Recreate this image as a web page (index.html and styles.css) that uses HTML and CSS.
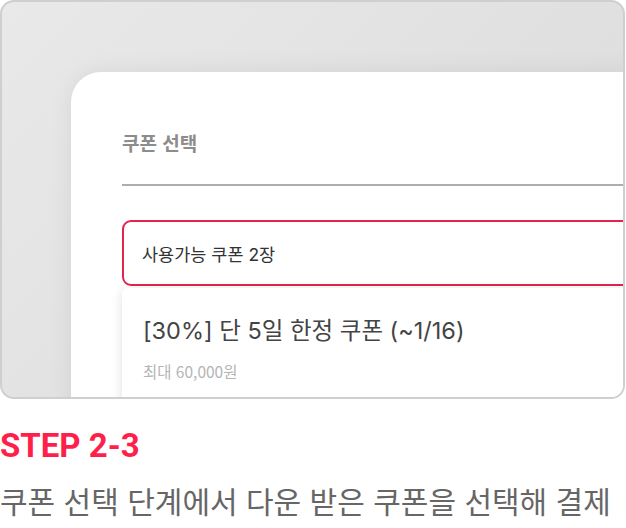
FILE: index.html
```html
<!DOCTYPE html>
<html lang="ko">
<head>
<meta charset="utf-8">
<link rel="stylesheet" href="styles.css">
</head>
<body>
<div class="frame">
  <div class="panel">
    <div class="title">쿠폰 선택</div>
    <div class="divider"></div>
    <div class="select">사용가능 쿠폰 2장</div>
    <div class="dropdown">
      <div class="coupon-name">[30%] 단 5일 한정 쿠폰 (~1/16)</div>
      <div class="coupon-max">최대 60,000원</div>
    </div>
  </div>
</div>
<div class="step">STEP 2-3</div>
<div class="desc">쿠폰 선택 단계에서 다운 받은 쿠폰을 선택해 결제</div>
</body>
</html>
```

FILE: styles.css
```css
* { box-sizing: border-box; }
html, body {
  margin: 0;
  padding: 0;
  background: #ffffff;
}
body {
  width: 626px;
  font-family: "Noto Sans CJK KR", "Noto Sans", sans-serif;
}
.frame {
  width: 625px;
  height: 399px;
  border: 2px solid #cfcfcf;
  border-radius: 14px;
  overflow: hidden;
  background: linear-gradient(135deg, #e9e9e9 0%, #e0e0e0 60%, #dddddd 100%);
  padding: 70px 0 0 69px;
}
.panel {
  width: 640px;
  height: 400px;
  background: #ffffff;
  border-top-left-radius: 30px;
  box-shadow: 0 0 24px rgba(0, 0, 0, 0.07);
  padding: 59px 0 0 51px;
}
.title {
  font-size: 19px;
  line-height: 24px;
  font-weight: 700;
  color: #8c8c8c;
}
.divider {
  margin-top: 29px;
  height: 2px;
  background: #adadad;
}
.select {
  margin-top: 34px;
  height: 66px;
  border: 2px solid #e3244f;
  border-radius: 9px;
  padding-left: 18px;
  display: flex;
  align-items: center;
  font-family: Inter, "Noto Sans CJK KR", sans-serif;
  font-size: 17.5px;
  color: #333333;
}
.dropdown {
  margin-top: 2px;
  height: 200px;
  background: #ffffff;
  border-radius: 6px;
  box-shadow: 0 2px 12px rgba(0, 0, 0, 0.12);
  padding: 24px 0 0 21px;
}
.coupon-name {
  font-family: Inter, "Noto Sans CJK KR", sans-serif;
  font-size: 23.5px;
  line-height: 38px;
  color: #444444;
}
.coupon-max {
  margin-top: 10px;
  font-size: 15.5px;
  line-height: 22px;
  color: #b5b5b5;
}
.step {
  margin-top: 27px;
  font-family: Roboto, "Noto Sans CJK KR", sans-serif;
  font-weight: 700;
  font-size: 33px;
  line-height: 40px;
  color: #ff1f4b;
}
.desc {
  margin-top: 14px;
  font-size: 30px;
  line-height: 40px;
  color: #666666;
  white-space: nowrap;
}
```
